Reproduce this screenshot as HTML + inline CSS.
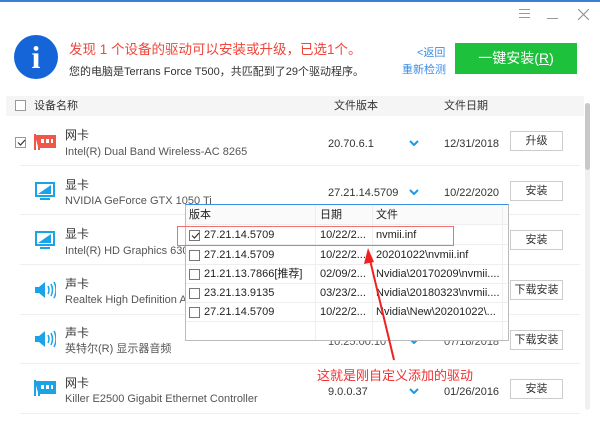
<!DOCTYPE html>
<html><head><meta charset="utf-8"><style>
*{margin:0;padding:0;box-sizing:border-box}
body{width:600px;height:436px;background:#fff;position:relative;overflow:hidden;font-family:"Liberation Sans","Noto Sans CJK SC",sans-serif;font-size:11px;color:#333}
.a{position:absolute;white-space:nowrap}
.t{font-size:11px;color:#333;line-height:14px}
.s{font-size:11px;color:#555;line-height:14px}
.btn{position:absolute;left:510px;width:53px;height:20px;border:1px solid #ccc;background:#fff;text-align:center;line-height:18px;font-size:11px;color:#333}
.sep{position:absolute;left:20px;width:560px;height:1px;background:#eee}
.chev{position:absolute;left:409px;width:10px;height:6px}
.cb{position:absolute;width:11px;height:11px;border:1px solid #777;background:#fff}
.pr{position:absolute;left:186px;width:322px;height:19px;border-bottom:1px solid #eee}
.pr span{position:absolute;top:2px;font-size:11px;color:#222;line-height:14px;white-space:nowrap}
</style></head><body>
<div class="a" style="left:0;top:0;width:600px;height:2px;background:#3b7fd4"></div>
<div class="a" style="left:519px;top:9px;width:11px;height:1px;background:#999;box-shadow:0 4px 0 #999,0 8px 0 #999"></div>
<div class="a" style="left:547px;top:18px;width:11px;height:1px;background:#999"></div>
<svg class="a" style="left:578px;top:9px" width="11" height="11"><path d="M0 0L11 11M11 0L0 11" stroke="#999" stroke-width="1.2"/></svg>
<div class="a" style="left:14px;top:35px;width:44px;height:44px;border-radius:50%;background:#1565d8;color:#fff;font-family:'Liberation Serif',serif;font-size:32px;font-weight:bold;text-align:center;line-height:44px">i</div>
<div class="a" style="left:69px;top:38px;font-size:13.5px;color:#f0453a">发现 1 个设备的驱动可以安装或升级，已选1个。</div>
<div class="a" style="left:69px;top:63px;font-size:11px;color:#333">您的电脑是Terrans Force T500，共匹配到了29个驱动程序。</div>
<div class="a" style="left:417px;top:44px;font-size:11px;color:#3a8ee6">&lt;返回</div>
<div class="a" style="left:402px;top:61px;font-size:11px;color:#3a8ee6">重新检测</div>
<div class="a" style="left:455px;top:43px;width:122px;height:31px;background:#1ec13c;color:#fff;font-size:14px;text-align:center;line-height:31px">一键安装(<u>R</u>)</div>
<div class="a" style="left:6px;top:96px;width:578px;height:20px;background:#f5f5f5"></div>
<div class="cb" style="left:15px;top:100px;border-color:#999"></div>
<div class="a t" style="left:34px;top:99px">设备名称</div>
<div class="a t" style="left:334px;top:99px">文件版本</div>
<div class="a t" style="left:444px;top:99px">文件日期</div>
<div class="a" style="left:585px;top:103px;width:5px;height:307px;background:#f0f0f0;border-radius:3px"></div>
<div class="a" style="left:585px;top:103px;width:5px;height:67px;background:#c8c8c8;border-radius:3px"></div>

<div class="cb" style="left:15px;top:137px;border-color:#999"></div>
<svg class="a" style="left:16px;top:137px" width="11" height="11"><path d="M2 5.5L4.5 8L9 3" stroke="#333" fill="none" stroke-width="1.2"/></svg>
<svg class="a" style="left:34px;top:133px" width="22" height="18"><path d="M1 1V17M1 3H21V14H5V17" stroke="#f0574a" stroke-width="2" fill="#f0574a"/><rect x="7" y="6" width="3" height="4" fill="#fff"/><rect x="12" y="6" width="3" height="4" fill="#fff"/><rect x="17" y="6" width="2" height="4" fill="#fff"/></svg>
<div class="a t" style="left:65px;top:128px;font-size:12px">网卡</div>
<div class="a s" style="left:65px;top:145px">Intel(R) Dual Band Wireless-AC 8265</div>
<div class="a t" style="left:328px;top:137px">20.70.6.1</div>
<svg class="chev" style="top:140px" viewBox="0 0 10 6"><path d="M1 1L5 5L9 1" stroke="#1a9be6" stroke-width="2" fill="none"/></svg>
<div class="a t" style="left:444px;top:137px">12/31/2018</div>
<div class="btn" style="top:131px">升级</div>
<div class="sep" style="top:165px"></div>

<svg class="a" style="left:35px;top:182px" width="20" height="19"><rect x="1" y="1" width="18" height="13" fill="none" stroke="#1aa3e8" stroke-width="2"/><path d="M3 12L16 3V12Z" fill="#1aa3e8"/><rect x="5" y="16" width="10" height="2" fill="#1aa3e8"/></svg>
<div class="a t" style="left:65px;top:178px;font-size:12px">显卡</div>
<div class="a s" style="left:65px;top:194px">NVIDIA GeForce GTX 1050 Ti</div>
<div class="a t" style="left:328px;top:186px">27.21.14.5709</div>
<svg class="chev" style="top:189px" viewBox="0 0 10 6"><path d="M1 1L5 5L9 1" stroke="#1a9be6" stroke-width="2" fill="none"/></svg>
<div class="a t" style="left:444px;top:186px">10/22/2020</div>
<div class="btn" style="top:181px">安装</div>
<div class="sep" style="top:214px"></div>

<svg class="a" style="left:35px;top:231px" width="20" height="19"><rect x="1" y="1" width="18" height="13" fill="none" stroke="#1aa3e8" stroke-width="2"/><path d="M3 12L16 3V12Z" fill="#1aa3e8"/><rect x="5" y="16" width="10" height="2" fill="#1aa3e8"/></svg>
<div class="a t" style="left:65px;top:227px;font-size:12px">显卡</div>
<div class="a s" style="left:65px;top:244px">Intel(R) HD Graphics 630</div>
<div class="btn" style="top:230px">安装</div>
<div class="sep" style="top:264px"></div>

<svg class="a" style="left:34px;top:280px" width="22" height="20"><path d="M1 7H5L11 2V18L5 13H1Z" fill="#1aa3e8"/><path d="M14 6Q16 10 14 14M17 4Q20 10 17 16M20 2Q24 10 20 18" stroke="#1aa3e8" stroke-width="1.5" fill="none"/></svg>
<div class="a t" style="left:65px;top:277px;font-size:12px">声卡</div>
<div class="a s" style="left:65px;top:293px">Realtek High Definition Au</div>
<div class="btn" style="top:280px">下载安装</div>
<div class="sep" style="top:314px"></div>

<svg class="a" style="left:34px;top:329px" width="22" height="20"><path d="M1 7H5L11 2V18L5 13H1Z" fill="#1aa3e8"/><path d="M14 6Q16 10 14 14M17 4Q20 10 17 16M20 2Q24 10 20 18" stroke="#1aa3e8" stroke-width="1.5" fill="none"/></svg>
<div class="a t" style="left:65px;top:326px;font-size:12px">声卡</div>
<div class="a s" style="left:65px;top:342px">英特尔(R) 显示器音频</div>
<div class="a t" style="left:328px;top:335px;color:#555">10.25.00.10</div>
<svg class="chev" style="top:338px" viewBox="0 0 10 6"><path d="M1 1L5 5L9 1" stroke="#1a9be6" stroke-width="2" fill="none"/></svg>
<div class="a t" style="left:444px;top:335px;color:#555">07/18/2018</div>
<div class="btn" style="top:330px">下载安装</div>
<div class="sep" style="top:363px"></div>

<svg class="a" style="left:34px;top:379px" width="22" height="18"><path d="M1 1V17M1 3H21V14H5V17" stroke="#1aa3e8" stroke-width="2" fill="#1aa3e8"/><rect x="7" y="6" width="3" height="4" fill="#fff"/><rect x="12" y="6" width="3" height="4" fill="#fff"/><rect x="17" y="6" width="2" height="4" fill="#fff"/></svg>
<div class="a t" style="left:65px;top:376px;font-size:12px">网卡</div>
<div class="a s" style="left:65px;top:392px">Killer E2500 Gigabit Ethernet Controller</div>
<div class="a t" style="left:328px;top:385px">9.0.0.37</div>
<svg class="chev" style="top:388px" viewBox="0 0 10 6"><path d="M1 1L5 5L9 1" stroke="#1a9be6" stroke-width="2" fill="none"/></svg>
<div class="a t" style="left:444px;top:385px">01/26/2016</div>
<div class="btn" style="top:379px">安装</div>
<div class="sep" style="top:413px"></div>

<div class="a" style="left:185px;top:204px;width:324px;height:137px;background:#fff;border:1px solid #bbb;border-top:1px solid #3b8ee6"></div>
<div class="a" style="left:186px;top:205px;width:322px;height:20px;background:#fafafa;border-bottom:1px solid #eee"></div>
<div class="a" style="left:315px;top:205px;width:1px;height:135px;background:#eee"></div>
<div class="a" style="left:372px;top:205px;width:1px;height:135px;background:#eee"></div>
<div class="a" style="left:502px;top:205px;width:1px;height:135px;background:#eee"></div>
<div class="a t" style="left:189px;top:208px;color:#222">版本</div>
<div class="a t" style="left:320px;top:208px;color:#222">日期</div>
<div class="a t" style="left:376px;top:208px;color:#222">文件</div>
<div class="pr" style="top:226px"><span style="left:18px">27.21.14.5709</span><span style="left:134px">10/22/2...</span><span style="left:190px">nvmii.inf</span></div>
<div class="pr" style="top:246px"><span style="left:18px">27.21.14.5709</span><span style="left:134px">10/22/2...</span><span style="left:190px">20201022\nvmii.inf</span></div>
<div class="pr" style="top:265px"><span style="left:18px">21.21.13.7866[推荐]</span><span style="left:134px">02/09/2...</span><span style="left:190px">Nvidia\20170209\nvmii....</span></div>
<div class="pr" style="top:284px"><span style="left:18px">23.21.13.9135</span><span style="left:134px">03/23/2...</span><span style="left:190px">Nvidia\20180323\nvmii....</span></div>
<div class="pr" style="top:303px"><span style="left:18px">27.21.14.5709</span><span style="left:134px">10/22/2...</span><span style="left:190px">Nvidia\New\20201022\...</span></div>
<div class="cb" style="left:189px;top:230px"></div>
<svg class="a" style="left:190px;top:230px" width="11" height="11"><path d="M2 5.5L4.5 8L9 3" stroke="#333" fill="none" stroke-width="1.2"/></svg>
<div class="cb" style="left:189px;top:250px"></div>
<div class="cb" style="left:189px;top:269px"></div>
<div class="cb" style="left:189px;top:288px"></div>
<div class="cb" style="left:189px;top:307px"></div>
<div class="a" style="left:177px;top:226px;width:277px;height:20px;border:1px solid #f07070"></div>
<svg class="a" style="left:0;top:0" width="600" height="436"><path d="M394 360L370 260" stroke="#f02020" stroke-width="2"/><path d="M368 248L364 264L374 262Z" fill="#f02020"/></svg>
<div class="a" style="left:317px;top:365px;font-size:13px;color:#f03030">这就是刚自定义添加的驱动</div>
</body></html>
